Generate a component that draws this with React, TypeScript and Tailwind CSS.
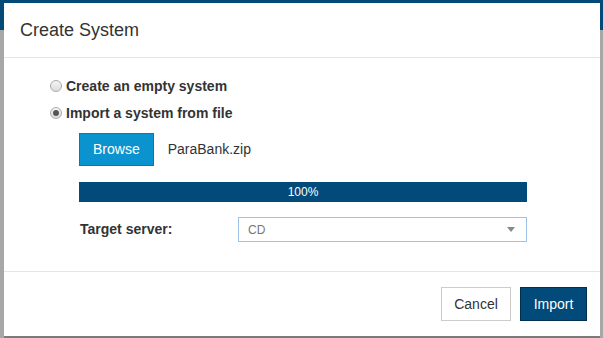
import { useState } from "react";

export default function App() {
  const [mode, setMode] = useState<"empty" | "import">("import");

  return (
    <div className="relative w-[603px] h-[338px] overflow-hidden bg-[#a7a7a7] font-['Liberation_Sans',Arial,sans-serif]">
      {/* page behind the modal */}
      <div className="h-[30px] bg-[#044a78]" />

      {/* Modal */}
      <div className="absolute left-[4px] top-[3px] w-[596px] h-[335px] bg-white border-b-2 border-[#7b7b7b] flex flex-col">
        {/* Header */}
        <div className="h-[55px] flex items-center px-[16px] border-b border-[#e5e5e5]">
          <h1 className="text-[18px] text-[#333]">Create System</h1>
        </div>

        {/* Body */}
        <div className="flex-1 pl-[46px] pt-[18px]">
          <label className="flex items-center gap-[4px] h-[20px] cursor-pointer">
            <Radio checked={mode === "empty"} onClick={() => setMode("empty")} />
            <span className="text-[14px] font-bold text-[#333]">Create an empty system</span>
          </label>
          <label className="flex items-center gap-[4px] h-[20px] mt-[7px] cursor-pointer">
            <Radio checked={mode === "import"} onClick={() => setMode("import")} />
            <span className="text-[14px] font-bold text-[#333]">Import a system from file</span>
          </label>

          <div className="pl-[29px]">
            <div className="flex items-center gap-[14px] mt-[10px]">
              <button className="h-[33px] px-[13px] bg-[#0a93cf] border border-[#0a78ad] text-white text-[14px]">
                Browse
              </button>
              <span className="text-[14px] text-[#333]">ParaBank.zip</span>
            </div>

            <div className="mt-[16px] w-[448px] h-[20px] bg-[#014a79] flex items-center justify-center">
              <span className="text-[12px] text-white">100%</span>
            </div>

            <div className="flex items-center mt-[15px]">
              <span className="w-[159px] pl-[1px] text-[14px] font-bold text-[#333]">Target server:</span>
              <div className="w-[289px] h-[25px] border border-[#9ec3e8] flex items-center justify-between pl-[9px] pr-[11px]">
                <span className="text-[12px] text-[#777]">CD</span>
                <svg width="8" height="5" viewBox="0 0 8 5">
                  <path d="M0 0 H8 L4 5 Z" fill="#888" />
                </svg>
              </div>
            </div>
          </div>
        </div>

        {/* Footer */}
        <div className="h-[65px] border-t border-[#e5e5e5] flex items-center justify-end gap-[9px] pr-[13px]">
          <button className="h-[34px] w-[70px] border border-[#ccc] bg-white text-[14px] text-[#333]">
            Cancel
          </button>
          <button className="h-[34px] w-[67px] border border-[#00304f] bg-[#014a79] text-[14px] text-white">
            Import
          </button>
        </div>
      </div>
    </div>
  );
}

function Radio({ checked, onClick }: { checked: boolean; onClick: () => void }) {
  return (
    <span
      onClick={onClick}
      className="w-[12px] h-[12px] rounded-full border border-[#aaa] bg-gradient-to-b from-[#f4f4f4] to-[#dcdcdc] flex items-center justify-center"
    >
      {checked && <span className="w-[6px] h-[6px] rounded-full bg-[#555]" />}
    </span>
  );
}
